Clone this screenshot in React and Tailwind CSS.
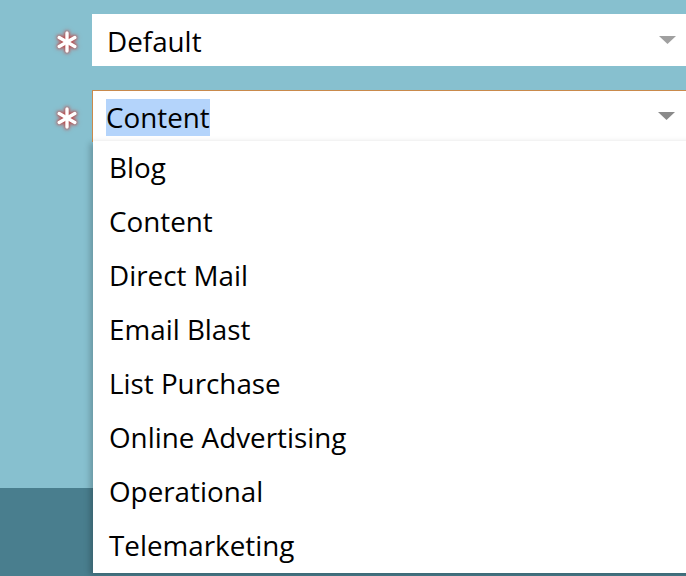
import React from 'react';

const options = [
  'Blog',
  'Content',
  'Direct Mail',
  'Email Blast',
  'List Purchase',
  'Online Advertising',
  'Operational',
  'Telemarketing',
];

const Asterisk = () => (
  <div className="w-[92px] h-[52px] flex items-center justify-end pr-[13px]">
    <svg width="24" height="24" viewBox="0 0 24 24" className="[filter:drop-shadow(0_0_1.5px_#b23a3a)_drop-shadow(0_0_2px_#c86060)] translate-y-[2px]">
      <g stroke="#fff" strokeWidth="3.4" strokeLinecap="round">
        <line x1="12" y1="3" x2="12" y2="21" />
        <line x1="4.2" y1="7.5" x2="19.8" y2="16.5" />
        <line x1="4.2" y1="16.5" x2="19.8" y2="7.5" />
      </g>
    </svg>
  </div>
);

const Caret = ({ color }) => (
  <div className="absolute right-[30px] top-1/2 -translate-y-1/2">
    <svg width="17" height="10" viewBox="0 0 17 10">
      <path d="M0 1 H17 L8.5 9 Z" fill={color} />
    </svg>
  </div>
);

export default function App() {
  return (
    <div className="w-[686px] h-[576px] overflow-hidden flex flex-col [font-family:'Open_Sans',sans-serif]">
      <div className="h-[488px] bg-[#87c0cf] pt-[14px] flex flex-col gap-[24px]">
        <div className="flex items-center">
          <Asterisk />
          <div className="relative flex-1 h-[52px] bg-white flex items-center pl-[15px] pt-[3px] -mr-[20px]">
            <span className="text-[27.8px] text-black">Default</span>
            <Caret color="#a0a0a0" />
          </div>
        </div>
        <div className="flex items-start">
          <Asterisk />
          <div className="relative flex-1 -mr-[20px]">
            <div className="relative h-[52px] bg-white border border-[#c98a4c] flex items-center pl-[13px] pt-[2px]">
              <span className="text-[27.8px] text-black bg-[#b4d4fb] leading-[37px]">Content</span>
              <Caret color="#8a8a8a" />
            </div>
            <ul className="absolute left-[1px] right-0 top-[51px] z-10 bg-white shadow-[-3px_2px_6px_rgba(0,0,0,0.22)]">
              {options.map((o) => (
                <li key={o} className="h-[54px] flex items-center pl-[16px] text-[27.8px] text-black">
                  {o}
                </li>
              ))}
            </ul>
          </div>
        </div>
      </div>
      <div className="flex-1 bg-[#497e8e]" />
    </div>
  );
}
